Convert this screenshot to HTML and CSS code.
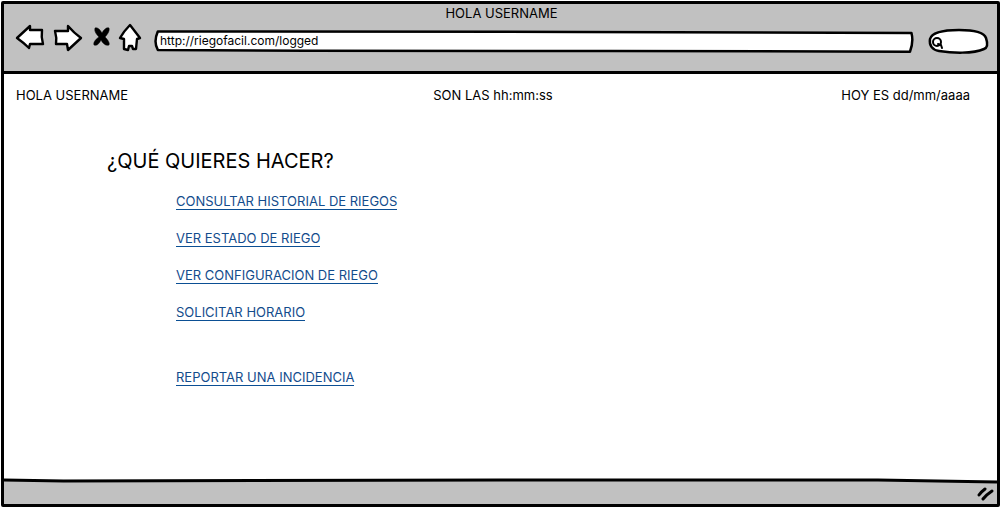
FILE: index.html
```html
<!DOCTYPE html>
<html lang="es">
<head>
<meta charset="utf-8">
<meta name="viewport" content="width=device-width, initial-scale=1">
<title>HOLA USERNAME</title>
<link rel="stylesheet" href="styles.css">
</head>
<body>
<div class="window">
  <header class="chrome">
    <div class="window-title">HOLA USERNAME</div>
    <div class="toolbar">
      <nav class="nav" aria-label="Navegador">
        <button class="nav-button" type="button" aria-label="Atrás">
          <svg width="30" height="28" viewBox="0 0 30 28"><path d="M2 14 L15 2 L15 6 L27 6 Q26 13 28 20 L15 20 L14 24 Q9 19 2 14Z"/></svg>
        </button>
        <button class="nav-button" type="button" aria-label="Adelante">
          <svg width="30" height="28" viewBox="0 0 30 28"><path d="M2 7 L15 7 L15 2 Q21 9 28 14 L15 26 L14 20 L3 20 Q4 14 2 7Z"/></svg>
        </button>
        <button class="nav-button stop" type="button" aria-label="Detener">
          <svg width="18" height="22" viewBox="0 0 18 22"><path class="solid" d="M2 1 C5 0 7 3 9 6 C11 2 14 0 16 1 C17 4 14 8 12 10 C15 13 17 16 16 18 C13 19 10 17 8 13 C6 17 4 19 1 18 C0 15 3 12 6 10 C3 7 1 4 2 1Z"/></svg>
        </button>
        <button class="nav-button" type="button" aria-label="Inicio">
          <svg width="24" height="30" viewBox="0 0 24 30"><path d="M12 2 L22 15 L19 16 L18 26 L15 26 L14 23 L11 23 L10 27 L6 26 Q6 21 6 16 L2 15 Q6 8 12 2Z"/></svg>
        </button>
      </nav>
      <div class="address">
        <svg class="outline" viewBox="0 0 100 100" preserveAspectRatio="none" aria-hidden="true"><path d="M0.5 2 L56 4 L99.8 9 Q100.1 50 99.6 94 L60 91 L20 90 L0.5 86 Q-0.1 50 0.5 2Z"/></svg>
        <input class="address-input" type="text" aria-label="Dirección" value="http://riegofacil.com/logged">
      </div>
      <div class="search">
        <svg class="outline" viewBox="0 0 60 26" preserveAspectRatio="none" aria-hidden="true"><path d="M2 10 C4 3 15 1 31 1 C46 1 56 3 58 9 C60 15 59 19 56 20 C45 25 24 24 11 22 C4 21 1 16 2 10Z"/></svg>
        <svg class="lens" width="12" height="13" viewBox="0 0 12 13" aria-hidden="true"><circle cx="5" cy="6" r="4"/><path d="M6 8 L9 9 L10 12"/></svg>
        <input class="search-input" type="search" aria-label="Buscar">
      </div>
    </div>
  </header>
  <main class="page">
    <div class="status">
      <span>HOLA USERNAME</span>
      <span>SON LAS hh:mm:ss</span>
      <span class="date">HOY ES dd/mm/aaaa</span>
    </div>
    <section class="menu">
      <h1 class="heading">¿QUÉ QUIERES HACER?</h1>
      <ul class="links">
        <li><a href="#historial">CONSULTAR HISTORIAL DE RIEGOS</a></li>
        <li><a href="#estado">VER ESTADO DE RIEGO</a></li>
        <li><a href="#configuracion">VER CONFIGURACION DE RIEGO</a></li>
        <li><a href="#horario">SOLICITAR HORARIO</a></li>
        <li class="report"><a href="#incidencia">REPORTAR UNA INCIDENCIA</a></li>
      </ul>
    </section>
  </main>
  <footer class="footer">
    <svg class="footer-edge" viewBox="0 0 1000 24" preserveAspectRatio="none" aria-hidden="true"><path class="fill" d="M0 0 L880 0 L1000 2 V24 H0Z"/><path class="line" d="M0 0 L60 1 L500 0 L880 0 L1000 2"/></svg>
    <svg class="grip" width="18" height="14" viewBox="0 0 18 14" aria-hidden="true"><path d="M2 8 Q4 5 8 2 M6 12 Q9 8 15 4"/></svg>
  </footer>
</div>
</body>
</html>
```
FILE: styles.css
```css
* {
  box-sizing: border-box;
}

body {
  margin: 0;
  background: #fff;
  color: #000;
  font: 13px/18px Inter, "Open Sans", sans-serif;
}

.window {
  display: flex;
  flex-direction: column;
  min-height: calc(100vh - 2px);
  margin: 1px;
  border: 3px solid #000;
  border-radius: 2px;
}

.chrome {
  padding: 0 9px 17px 11px;
  border-bottom: 3px solid #000;
  background: #c1c1c1;
}

.window-title {
  text-align: center;
}

.toolbar {
  display: flex;
  align-items: center;
  height: 32px;
}

.nav {
  display: flex;
  align-items: center;
  gap: 8px;
  margin-right: 12px;
}

.nav-button {
  display: flex;
  padding: 0;
  border: 0;
  background: none;
}

.nav-button path {
  fill: #fff;
  stroke: #000;
  stroke-width: 2.4;
  stroke-linejoin: round;
}

.nav-button .solid {
  fill: #000;
  stroke-width: 0.5;
}

.stop {
  margin-left: 2px;
}

.nav-button:last-child {
  margin-left: -1px;
}

.address {
  display: grid;
  grid-template-rows: 22px;
  flex: 1;
  margin-top: 8px;
}

.outline {
  grid-area: 1 / 1;
  width: 100%;
  height: 100%;
  overflow: visible;
}

.outline path {
  fill: #fff;
  stroke: #000;
  stroke-width: 2.5;
  stroke-linejoin: round;
  vector-effect: non-scaling-stroke;
}

.address-input,
.search-input {
  grid-area: 1 / 1;
  z-index: 1;
  min-width: 0;
  width: 100%;
  padding: 0 6px 2px;
  border: 0;
  background: none;
  color: #000;
  font: inherit;
  font-size: 12px;
  outline: 0;
}

.search {
  display: grid;
  grid-template-rows: 26px;
  align-items: center;
  width: 60px;
  margin: 8px 0 0 15px;
}

.search .search-input {
  padding-left: 18px;
}

.lens {
  grid-area: 1 / 1;
  z-index: 1;
  margin-left: 4px;
  fill: none;
  stroke: #000;
  stroke-width: 2;
  stroke-linecap: round;
}

.page {
  flex: 1;
  padding: 12px 27px 24px 12px;
}

.status {
  display: grid;
  grid-template-columns: 1fr auto 1fr;
}

.date {
  text-align: right;
}

.menu {
  padding: 45px 0 0 91px;
}

.heading {
  margin: 0;
  font-size: 20px;
  font-weight: 400;
  line-height: 24px;
}

.links {
  display: grid;
  gap: 20px;
  margin: 20px 0 0;
  padding: 0 0 0 69px;
  list-style: none;
}

.links li {
  display: flex;
}

.links a {
  border-bottom: 1px solid #0b4f94;
  color: #134c8c;
  line-height: 16px;
  text-decoration: none;
}

.links .report {
  margin-top: 28px;
}

.footer {
  display: grid;
  grid-template-rows: 24px;
}

.footer-edge {
  grid-area: 1 / 1;
  width: 100%;
  height: 24px;
  overflow: visible;
}

.footer-edge .fill {
  fill: #c1c1c1;
}

.footer-edge .line {
  fill: none;
  stroke: #000;
  stroke-width: 3;
  vector-effect: non-scaling-stroke;
}

.grip {
  grid-area: 1 / 1;
  place-self: end;
  margin: 0 2px 3px 0;
  fill: none;
  stroke: #000;
  stroke-width: 3;
  stroke-linecap: round;
}
```
